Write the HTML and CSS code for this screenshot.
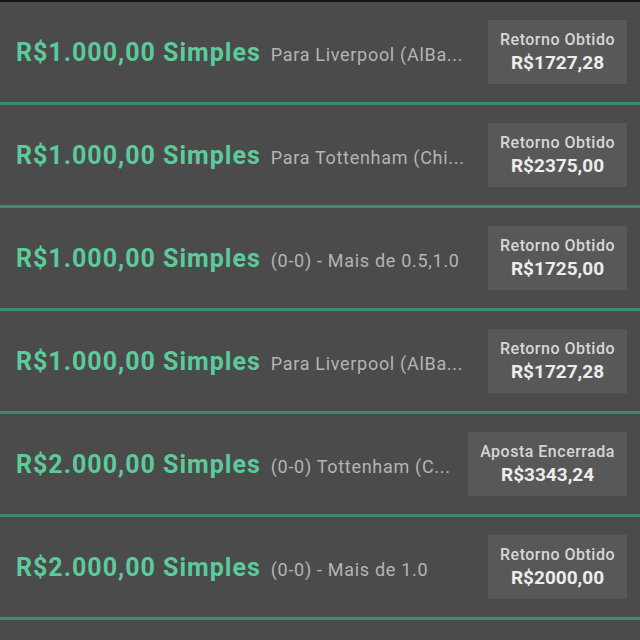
FILE: index.html
```html
<!DOCTYPE html>
<html lang="pt-BR">
<head>
    <meta charset="UTF-8">
    <meta name="viewport" content="width=device-width, initial-scale=1.0">
    <title>Minhas Apostas</title>
    <link rel="stylesheet" href="styles.css">
</head>
<body>
    <div class="bets">
        <div class="bet">
            <div class="bet-info">
                <span class="stake">R$1.000,00 Simples</span>
                <span class="selection">Para Liverpool (AlBa...</span>
            </div>
            <div class="result">
                <div class="result-label">Retorno Obtido</div>
                <div class="result-value">R$1727,28</div>
            </div>
        </div>
        <div class="bet">
            <div class="bet-info">
                <span class="stake">R$1.000,00 Simples</span>
                <span class="selection">Para Tottenham (Chi...</span>
            </div>
            <div class="result">
                <div class="result-label">Retorno Obtido</div>
                <div class="result-value">R$2375,00</div>
            </div>
        </div>
        <div class="bet">
            <div class="bet-info">
                <span class="stake">R$1.000,00 Simples</span>
                <span class="selection">(0-0) - Mais de 0.5,1.0</span>
            </div>
            <div class="result">
                <div class="result-label">Retorno Obtido</div>
                <div class="result-value">R$1725,00</div>
            </div>
        </div>
        <div class="bet">
            <div class="bet-info">
                <span class="stake">R$1.000,00 Simples</span>
                <span class="selection">Para Liverpool (AlBa...</span>
            </div>
            <div class="result">
                <div class="result-label">Retorno Obtido</div>
                <div class="result-value">R$1727,28</div>
            </div>
        </div>
        <div class="bet">
            <div class="bet-info">
                <span class="stake">R$2.000,00 Simples</span>
                <span class="selection">(0-0) Tottenham (C...</span>
            </div>
            <div class="result">
                <div class="result-label">Aposta Encerrada</div>
                <div class="result-value">R$3343,24</div>
            </div>
        </div>
        <div class="bet">
            <div class="bet-info">
                <span class="stake">R$2.000,00 Simples</span>
                <span class="selection">(0-0) - Mais de 1.0</span>
            </div>
            <div class="result">
                <div class="result-label">Retorno Obtido</div>
                <div class="result-value">R$2000,00</div>
            </div>
        </div>
    </div>
</body>
</html>
```

FILE: styles.css
```css
body {
    margin: 0;
    background: #4b4b4b;
    font-family: Roboto, "Liberation Sans", sans-serif;
    height: 640px;
    overflow: hidden;
    border-top: 2px solid #151515;
    box-sizing: border-box;
}
.bet {
    height: 100px;
    display: flex;
    align-items: center;
    justify-content: space-between;
    padding: 0 13px 0 16px;
    border-bottom: 3px solid #3d8a6e;
}
.bet-info {
    display: flex;
    align-items: baseline;
    gap: 10px;
    white-space: nowrap;
}
.stake {
    color: #5ccb9c;
    font-weight: bold;
    font-size: 25px;
    letter-spacing: 1px;
}
.selection {
    color: #b4b4b4;
    font-size: 18px;
    letter-spacing: 0.7px;
}
.result {
    background: #585858;
    padding: 10px 12px;
    text-align: center;
    min-width: 113px;
}
.result-label {
    color: #d6d6d6;
    font-size: 16px;
    font-weight: 500;
    letter-spacing: 0.5px;
}
.result-value {
    color: #ececec;
    font-size: 19px;
    font-weight: bold;
    margin-top: 2px;
}
```
